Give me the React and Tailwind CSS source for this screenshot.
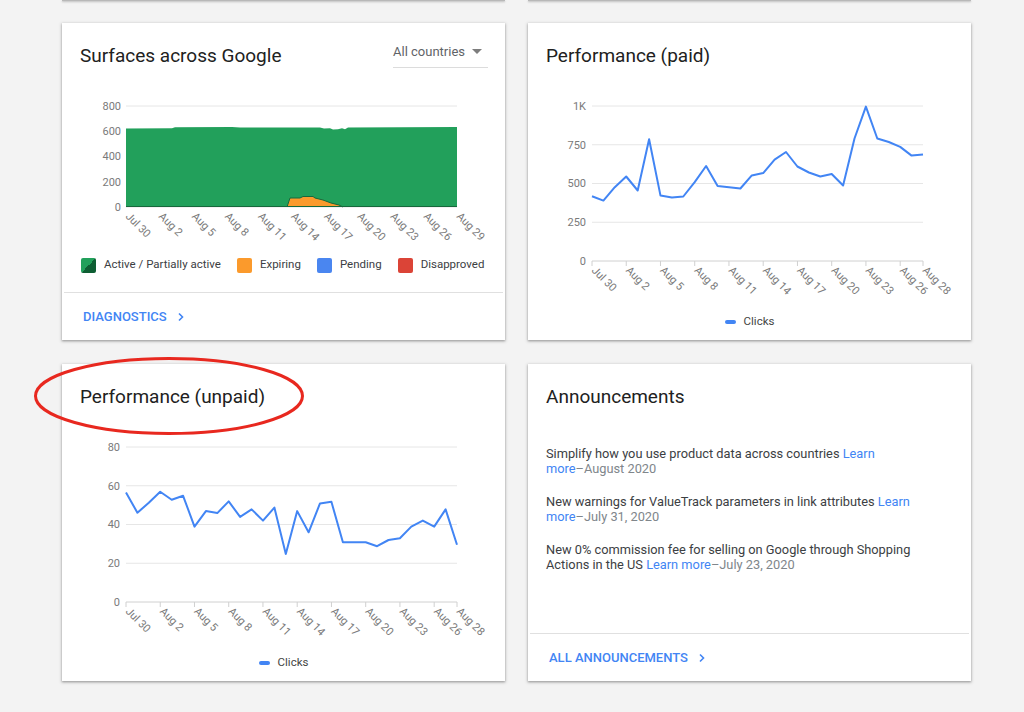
import React from "react";

const paid = [418,390,476,545,455,786,422,409,416,509,613,483,476,468,552,567,654,703,610,571,545,561,487,790,996,790,768,736,680,688];
const unpaid = [56.5,46.1,51.2,56.9,52.8,54.8,38.9,46.9,45.9,51.9,43.9,47.8,42,48.7,24.8,46.9,36,50.9,51.7,30.8,30.8,30.8,28.8,32,32.9,38.9,42,38.9,47.8,29.5];

const X0 = 64, X1 = 395;

function XLabels({ n, ticks, axisY, tickMarks }) {
  const px = (i) => X0 + (i * (X1 - X0)) / (n - 1);
  return (
    <g>
      {ticks.map(([i, label]) => {
        const x = px(i);
        return (
          <g key={label}>
            {tickMarks && <line x1={x} x2={x} y1={axisY} y2={axisY + 5} stroke="#d0d0d0" strokeWidth="1" />}
            <text x={x - 1} y={axisY + 10} fontSize="11" fill="#7a7a7a" transform={`rotate(45 ${x - 1} ${axisY + 10})`}>
              {label}
            </text>
          </g>
        );
      })}
    </g>
  );
}

const ticks30 = [[0,"Jul 30"],[3,"Aug 2"],[6,"Aug 5"],[9,"Aug 8"],[12,"Aug 11"],[15,"Aug 14"],[18,"Aug 17"],[21,"Aug 20"],[24,"Aug 23"],[27,"Aug 26"],[29,"Aug 28"]];
const ticks31 = [[0,"Jul 30"],[3,"Aug 2"],[6,"Aug 5"],[9,"Aug 8"],[12,"Aug 11"],[15,"Aug 14"],[18,"Aug 17"],[21,"Aug 20"],[24,"Aug 23"],[27,"Aug 26"],[30,"Aug 29"]];

function LineChart({ data, max, yLabels }) {
  const yT = 38, yB = 193;
  const n = data.length;
  const px = (i) => X0 + (i * (X1 - X0)) / (n - 1);
  const py = (v) => yB - (v / max) * (yB - yT);
  const pts = data.map((v, i) => `${px(i).toFixed(1)},${py(v).toFixed(1)}`).join(" ");
  return (
    <svg width="443" height="240" className="block">
      {yLabels.map((l, k) => {
        const y = yB - (k * (yB - yT)) / (yLabels.length - 1);
        return (
          <g key={l}>
            <line x1={X0} x2={X1} y1={y} y2={y} stroke={k === 0 ? "#d0d0d0" : "#e6e6e6"} strokeWidth="1" />
            <text x="58" y={y} dy="0.35em" textAnchor="end" fontSize="11" fill="#7a7a7a">{l}</text>
          </g>
        );
      })}
      <polyline points={pts} fill="none" stroke="#4285f4" strokeWidth="2" strokeLinejoin="round" />
      <XLabels n={n} ticks={ticks30} axisY={yB} tickMarks />
    </svg>
  );
}

function SurfacesChart() {
  const yT = 38, yB = 139;
  const c = (pts) => pts.map(([x, y]) => `${x - 62},${y - 68}`).join(" ");
  const green = c([[126,128.5],[172,128.3],[175,127.2],[232,127],[240,127.5],[320,127.5],[324,128.6],[330,128.2],[333,129.6],[338,129.2],[342,128.2],[345,129.3],[348,127.6],[457,127],[457,207],[126,207]]);
  const orangeTop = [[287,207],[290,198],[300,198],[303,196.5],[313,196.5],[315,198],[319,199],[323,200],[327,201.5],[331,203],[335,204],[339,205],[343,207]];
  return (
    <svg width="443" height="182" className="block">
      {["0","200","400","600","800"].map((l, k) => {
        const y = yB - (k * (yB - yT)) / 4;
        return (
          <g key={l}>
            <line x1={X0} x2={X1} y1={y} y2={y} stroke="#e6e6e6" strokeWidth="1" />
            <text x="59" y={y} dy="0.35em" textAnchor="end" fontSize="11" fill="#7a7a7a">{l}</text>
          </g>
        );
      })}
      <polygon points={green} fill="#22a05b" />
      <polygon points={c(orangeTop)} fill="#fb9a2c" />
      <polyline points={c(orangeTop)} fill="none" stroke="#17683c" strokeWidth="1" />
      <line x1={X0} x2={X1} y1={yB - 0.5} y2={yB - 0.5} stroke="#17683c" strokeWidth="1" />
      <XLabels n={31} ticks={ticks31} axisY={yB} />
    </svg>
  );
}

function Chevron() {
  return (
    <svg width="8" height="10" viewBox="0 0 8 10" className="block">
      <path d="M2 1.5 L5.5 5 L2 8.5" fill="none" stroke="#4285f4" strokeWidth="1.6" />
    </svg>
  );
}

function Card({ children }) {
  return (
    <div className="w-[443px] h-[317px] bg-white flex flex-col shadow-[0_1px_2px_rgba(0,0,0,0.28),0_1px_3px_1px_rgba(0,0,0,0.12)]">
      {children}
    </div>
  );
}

function Title({ children, right }) {
  return (
    <div className="h-[45px] pt-[21px] pl-[18px] pr-[17px] flex justify-between items-start">
      <div className="text-[19px] leading-[24px] text-[#212121]">{children}</div>
      {right}
    </div>
  );
}

function Footer({ children }) {
  return (
    <>
      <div className="mx-[2px] border-t border-[#e0e0e0]" />
      <div className="h-[47px] pl-[21px] flex items-center gap-[10px] text-[13px] font-medium text-[#4285f4]">
        <span>{children}</span>
        <Chevron />
      </div>
    </>
  );
}

function LegendItem({ cls, label }) {
  return (
    <div className="flex items-center gap-[8px]">
      <div className={`w-[15px] h-[15px] rounded-[2px] ${cls}`} />
      <span>{label}</span>
    </div>
  );
}

function ClicksLegend() {
  return (
    <div className="h-[28px] flex justify-center items-center gap-[8px] text-[11.5px] text-[#444]">
      <div className="w-[11px] h-[4px] rounded-full bg-[#4285f4]" />
      <span>Clicks</span>
    </div>
  );
}

function Announcement({ text, date }) {
  return (
    <p className="text-[12.8px] leading-[14.5px] text-[#3c4043]">
      {text} <span className="text-[#4285f4]">Learn</span>{" "}
      <span className="whitespace-nowrap">
        <span className="text-[#4285f4]">more</span>
        <span className="text-[#80868b]">–{date}</span>
      </span>
    </p>
  );
}

export default function App() {
  return (
    <div className="relative w-[1024px] h-[712px] overflow-hidden bg-[#f3f3f3] font-[Roboto,sans-serif]">
      <div className="flex gap-[23px] pl-[62px]">
        <div className="w-[443px] h-[1px] bg-[#b8b8b8] shadow-[0_1px_2px_rgba(0,0,0,0.3)]" />
        <div className="w-[443px] h-[1px] bg-[#b8b8b8] shadow-[0_1px_2px_rgba(0,0,0,0.3)]" />
      </div>
      <div className="pl-[62px] pt-[22px] flex flex-col gap-[24px]">
        <div className="flex gap-[23px]">
          <Card>
            <Title
              right={
                <div className="w-[95px] h-[24px] border-b border-[#dcdcdc] flex justify-between items-start">
                  <span className="text-[13px] leading-[16px] text-[#5f6368]">All countries</span>
                  <svg width="10" height="6" viewBox="0 0 10 6" className="mt-[5px] mr-[6px]">
                    <path d="M0 0 L10 0 L5 5 Z" fill="#7d7d7d" />
                  </svg>
                </div>
              }
            >
              Surfaces across Google
            </Title>
            <SurfacesChart />
            <div className="h-[30px] pl-[19px] flex items-center gap-[16px] text-[11.5px] text-[#3c4043]">
              <LegendItem cls="bg-[linear-gradient(to_bottom_right,#22a05b_50%,#0e5e33_50%)]" label="Active / Partially active" />
              <LegendItem cls="bg-[#fb9a2c]" label="Expiring" />
              <LegendItem cls="bg-[#4a86f0]" label="Pending" />
              <LegendItem cls="bg-[#db4437]" label="Disapproved" />
            </div>
            <div className="flex-1" />
            <Footer>DIAGNOSTICS</Footer>
          </Card>
          <Card>
            <Title>Performance (paid)</Title>
            <LineChart data={paid} max={1000} yLabels={["0","250","500","750","1K"]} />
            <ClicksLegend />
          </Card>
        </div>
        <div className="flex gap-[23px]">
          <Card>
            <Title>Performance (unpaid)</Title>
            <LineChart data={unpaid} max={80} yLabels={["0","20","40","60","80"]} />
            <ClicksLegend />
          </Card>
          <Card>
            <Title>Announcements</Title>
            <div className="flex-1 pt-[38px] pl-[18px] pr-[18px] flex flex-col gap-[19px]">
              <Announcement text="Simplify how you use product data across countries" date="August 2020" />
              <Announcement text="New warnings for ValueTrack parameters in link attributes" date="July 31, 2020" />
              <Announcement text="New 0% commission fee for selling on Google through Shopping Actions in the US" date="July 23, 2020" />
            </div>
            <Footer>ALL ANNOUNCEMENTS</Footer>
          </Card>
        </div>
      </div>
      <svg className="absolute left-[33px] top-[356px]" width="272" height="80" viewBox="0 0 272 80">
        <ellipse cx="136" cy="40" rx="133.5" ry="37.5" fill="none" stroke="#e8281f" strokeWidth="3" />
      </svg>
    </div>
  );
}
